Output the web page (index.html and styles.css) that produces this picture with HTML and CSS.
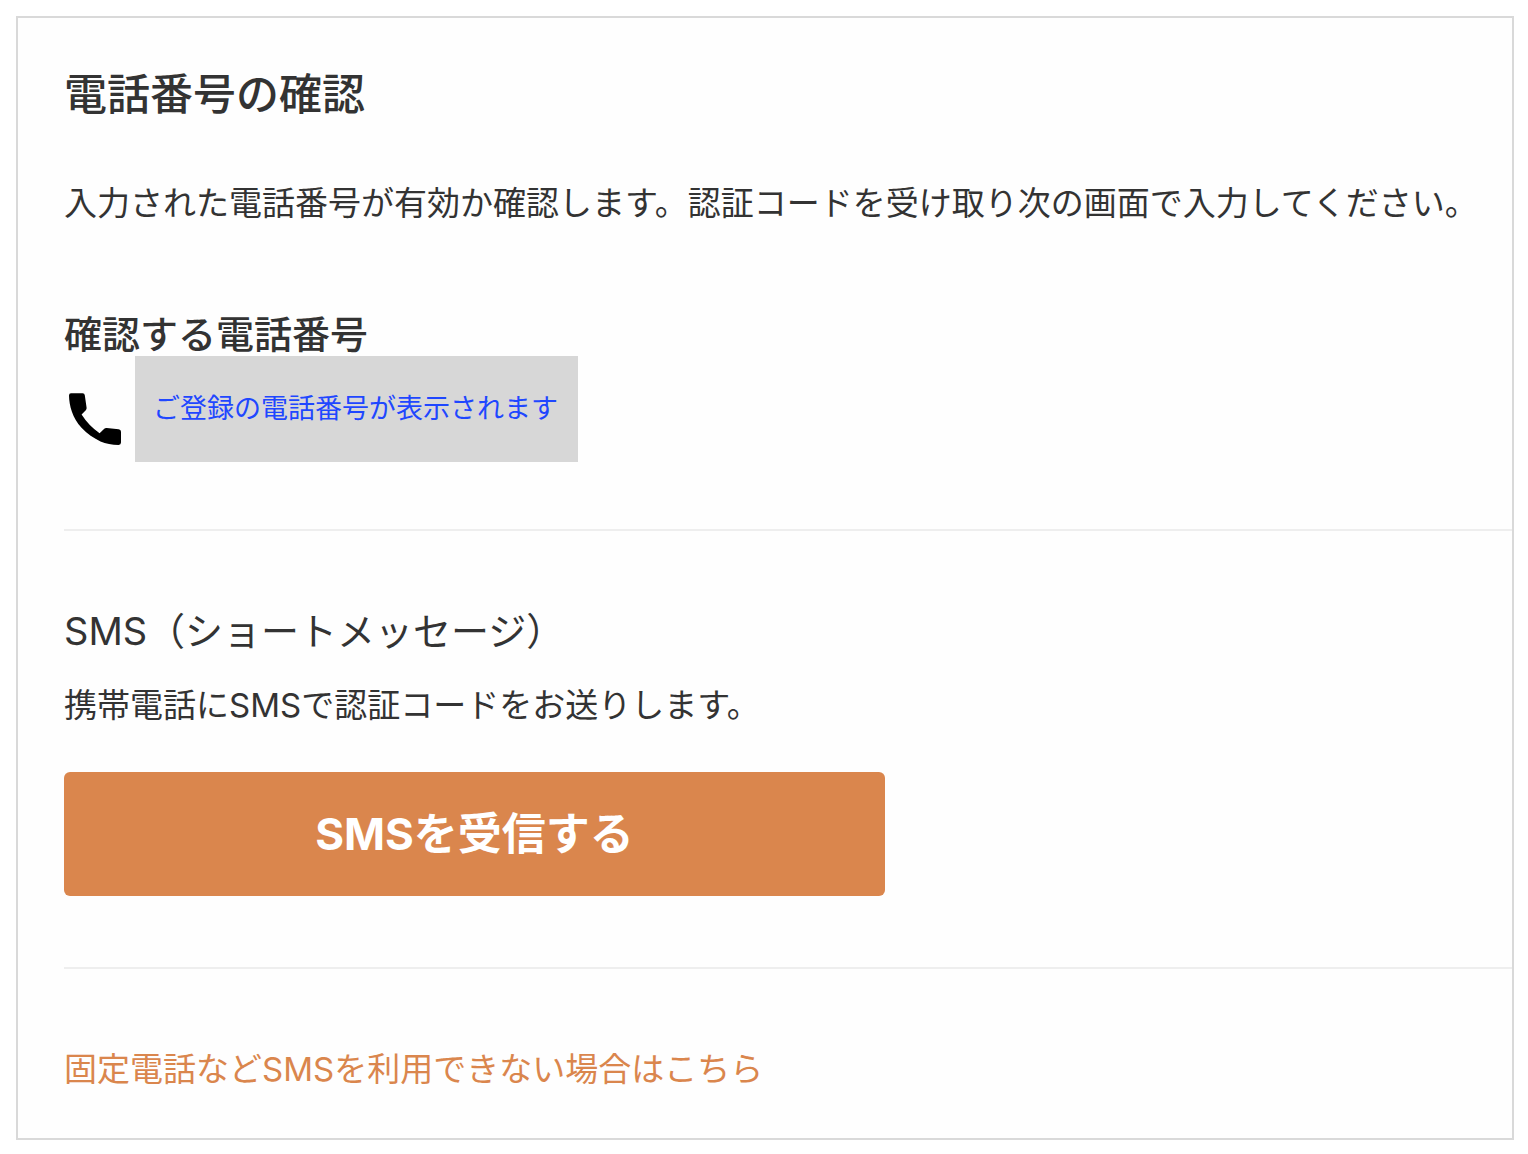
FILE: index.html
```html
<!DOCTYPE html>
<html lang="ja">

<head>
  <meta charset="UTF-8">
  <meta name="viewport" content="width=device-width, initial-scale=1.0">

  <title>電話番号の確認</title>
  <link rel="stylesheet" href="styles.css">
</head>

<body>
  <main class="card">
    <section class="confirm">
      <h1>電話番号の確認</h1>
      <p class="lead">入力された電話番号が有効か確認します。認証コードを受け取り次の画面で入力してください。</p>

      <h2>確認する電話番号</h2>
      <div class="phone">
        <svg class="phone-icon" viewBox="4 5 52 52" aria-hidden="true">
          <path d="M6 5.2H17.6Q19.6 5.2 19.8 7.2L21.6 19.8Q21.8 21.2 20.8 22.2L16.6 26.5Q23.5 37.5 34.6 45.2L39 41Q40.2 39.9 41.8 40.1L53.6 41.3Q56 41.6 56 43.8V54.6Q56 57 53.6 57Q43.5 56.8 35.5 53.4C29 50.5 22 45.8 16.5 39.8C7.5 29.5 4.2 18 4 7.4Q4 5.2 6 5.2Z"/>
        </svg>
        <div class="phone-number">ご登録の電話番号が表示されます</div>
      </div>
    </section>

    <section class="sms">
      <h2>SMS（ショートメッセージ）</h2>
      <p>携帯電話にSMSで認証コードをお送りします。</p>
      <button type="button" class="send-button">SMSを受信する</button>
    </section>

    <section class="other">
      <a href="#">固定電話などSMSを利用できない場合はこちら</a>
    </section>
  </main>
</body>

</html>
```

FILE: styles.css
```css
* {
  box-sizing: border-box;
}

body {
  margin: 16px 14px 14px 16px;
  background-color: #fff;
  color: #333;
  font-family: Inter, "Noto Sans CJK JP", sans-serif;
  font-size: 33px;
  line-height: 50px;
}

h1,
h2,
p {
  margin: 0;
  font-weight: 500;
}

h1 {
  font-size: 43px;
  line-height: 60px;
}

h2 {
  font-size: 38px;
  line-height: 44px;
}

p {
  font-weight: 400;
}

.card {
  padding: 46px 0 44px 46px;
  border: 2px solid #d9d9d9;
  background-color: #fefefe;
}

.confirm {
  padding-bottom: 67px;
}

.lead {
  margin: 54px 0 84px;
}

.phone {
  display: flex;
  align-items: flex-start;
  gap: 14px;
  padding-left: 5px;
}

.phone-icon {
  flex: none;
  width: 52px;
  height: 52px;
  margin-top: 37px;
  fill: #000;
}

.phone-number {
  padding: 28px 20px 28px 18px;
  background-color: #d7d7d7;
  color: #1f47ff;
  font-size: 27px;
}

.sms {
  padding: 78px 0 71px;
  border-top: 2px solid #eee;
  border-bottom: 2px solid #eee;
}

.sms h2 {
  font-weight: 400;
}

.sms p {
  margin: 27px 0 42px;
}

.send-button {
  display: block;
  width: 100%;
  max-width: 821px;
  padding: 32px 16px;
  border: none;
  border-radius: 6px;
  background-color: #da864d;
  color: #fff;
  font-family: inherit;
  font-size: 44px;
  font-weight: 700;
  line-height: 60px;
  cursor: pointer;
}

.other {
  padding-top: 75px;
}

.other a {
  display: inline-block;
  color: #da864d;
  text-decoration: none;
}
```
